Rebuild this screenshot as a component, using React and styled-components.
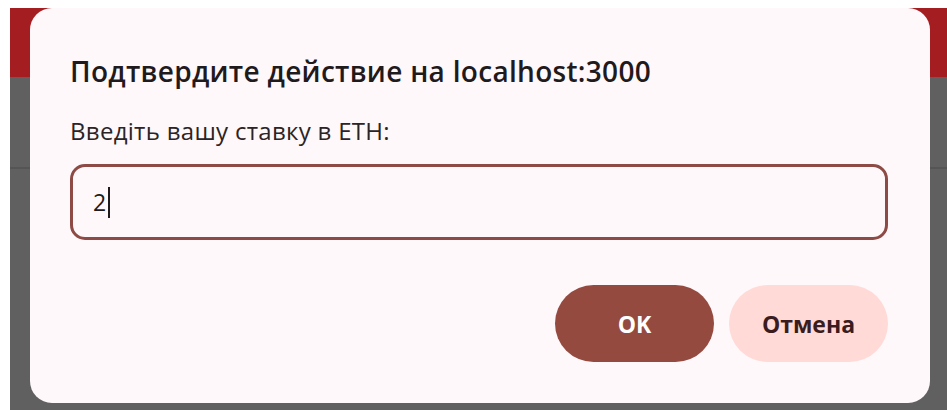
import React from "react";
import styled, { createGlobalStyle } from "styled-components";

const GlobalStyle = createGlobalStyle`
  html, body {
    margin: 0;
    padding: 0;
    background: #ffffff;
  }
  body {
    font-family: "Open Sans", "Noto Sans", "DejaVu Sans", sans-serif;
  }
`;

function App() {
  return (
    <>
      <GlobalStyle />
      <Frame>
        <Screen>
          <TopBar />
          <Backdrop>
            <Divider />
          </Backdrop>
          <Dialog>
            <Title>Подтвердите действие на localhost:3000</Title>
            <Label>Введіть вашу ставку в ETH:</Label>
            <Field>
              2<Caret />
            </Field>
            <Actions>
              <Button primary>OK</Button>
              <Button>Отмена</Button>
            </Actions>
          </Dialog>
        </Screen>
      </Frame>
    </>
  );
}

const Frame = styled.div`
  width: 947px;
  height: 410px;
  padding: 8px 0 0 10px;
  box-sizing: border-box;
  overflow: hidden;
`;

const Screen = styled.div`
  position: relative;
  height: 100%;
  display: flex;
  flex-direction: column;
  background: #606060;
`;

const TopBar = styled.div`
  height: 69px;
  background: #a31d21;
`;

const Backdrop = styled.div`
  flex: 1;
  padding-top: 90px;
`;

const Divider = styled.div`
  height: 2px;
  background: #555555;
`;

/* modal sheet sitting over the dimmed page */
const Dialog = styled.div`
  position: absolute;
  left: 20px;
  top: 0;
  width: 900px;
  height: 395px;
  box-sizing: border-box;
  padding: 45px 42px 0 40px;
  background: #fff8fb;
  border-radius: 22px;
  display: flex;
  flex-direction: column;
`;

const Title = styled.h1`
  margin: 0;
  font-size: 28px;
  line-height: 36px;
  font-weight: 600;
  color: #1f1a1c;
  letter-spacing: 0.3px;
`;

const Label = styled.div`
  margin-top: 27px;
  font-size: 24px;
  line-height: 30px;
  color: #2a2426;
  letter-spacing: 0.3px;
`;

const Field = styled.div`
  margin-top: 18px;
  height: 76px;
  box-sizing: border-box;
  border: 3px solid #8e4a44;
  border-radius: 15px;
  padding: 0 20px;
  display: flex;
  align-items: center;
  font-size: 23px;
  color: #1f1a1c;
`;

const Caret = styled.span`
  display: inline-block;
  width: 2px;
  height: 31px;
  margin-left: 2px;
  background: #1f1a1c;
`;

const Actions = styled.div`
  margin-top: 45px;
  display: flex;
  justify-content: flex-end;
  gap: 15px;
`;

const Button = styled.button`
  width: 159px;
  height: 77px;
  border: none;
  border-radius: 39px;
  font-family: inherit;
  font-size: 23px;
  font-weight: 700;
  letter-spacing: 0;
  background: ${(p) => (p.primary ? "#954a40" : "#ffdad6")};
  color: ${(p) => (p.primary ? "#ffffff" : "#3a1c1f")};
`;

export default App;
